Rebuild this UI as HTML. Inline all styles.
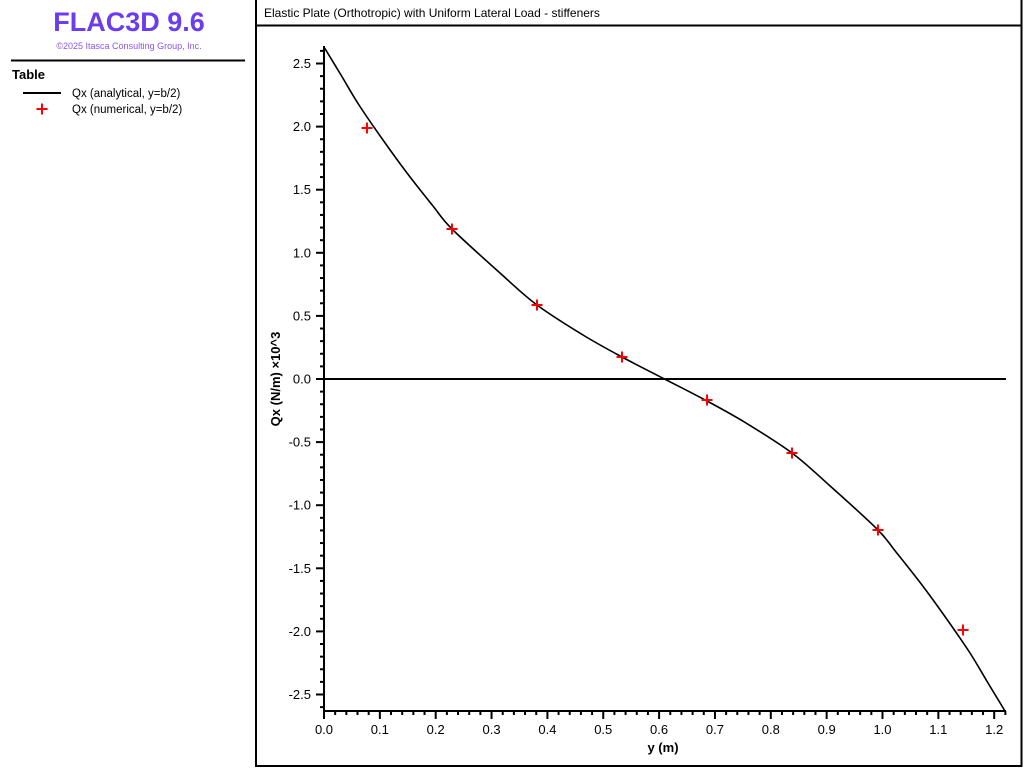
<!DOCTYPE html>
<html><head><meta charset="utf-8"><style>
html,body{margin:0;padding:0;background:#fff;width:1024px;height:768px;overflow:hidden}
svg{display:block}
text{font-family:"Liberation Sans",sans-serif}
</style></head><body>
<svg id="s" width="1024" height="768" xmlns="http://www.w3.org/2000/svg">
<rect x="0" y="0" width="1024" height="768" fill="#fff"/>
<line x1="256" y1="0" x2="256" y2="767" stroke="#000" stroke-width="2"/>
<line x1="256" y1="25.5" x2="1022" y2="25.5" stroke="#000" stroke-width="2"/>
<line x1="1021.5" y1="0" x2="1021.5" y2="767" stroke="#000" stroke-width="2"/>
<line x1="256" y1="766" x2="1022" y2="766" stroke="#000" stroke-width="2"/>
<text x="264" y="17" font-size="12" fill="#000">Elastic Plate (Orthotropic) with Uniform Lateral Load - stiffeners</text>
<text x="129" y="31" font-size="27" font-weight="bold" fill="#6a3df0" text-anchor="middle">FLAC3D 9.6</text>
<text x="129" y="49" font-size="9" fill="#8a55f0" text-anchor="middle">©2025 Itasca Consulting Group, Inc.</text>
<line x1="11" y1="60.5" x2="245" y2="60.5" stroke="#000" stroke-width="2"/>
<text x="12" y="79" font-size="13" font-weight="bold" fill="#000">Table</text>
<line x1="23" y1="93" x2="61" y2="93" stroke="#000" stroke-width="2"/>
<text x="72" y="97" font-size="11.5" fill="#000">Qx (analytical, y=b/2)</text>
<path d="M36.5 109h11M42 103.5v11" stroke="#f00" stroke-width="2"/>
<text x="72" y="113" font-size="11.5" fill="#000">Qx (numerical, y=b/2)</text>
<g id="ax" stroke="#000" stroke-width="2" fill="none">
<line x1="324" y1="46" x2="324" y2="712"/>
<line x1="323" y1="711" x2="1006" y2="711"/>
<line x1="324" y1="379" x2="1006" y2="379"/>
</g>
<g id="lab" font-size="13" fill="#000"></g>
<path id="cv" d="" stroke="#000" stroke-width="1.6" fill="none" stroke-linejoin="round"/>
<g id="pts" stroke="#f00" stroke-width="2"></g>
<text x="663" y="752" font-size="13" font-weight="bold" text-anchor="middle" fill="#000">y (m)</text>
<text transform="translate(280,379) rotate(-90)" font-size="13" font-weight="bold" text-anchor="middle" fill="#000">Qx (N/m) ×10^3</text>
</svg>
<script>
var ns="http://www.w3.org/2000/svg",ax=document.getElementById('ax'),lab=document.getElementById('lab'),pts=document.getElementById('pts');
function L(g,x1,y1,x2,y2){var l=document.createElementNS(ns,'line');l.setAttribute('x1',x1);l.setAttribute('y1',y1);l.setAttribute('x2',x2);l.setAttribute('y2',y2);g.appendChild(l);}
function T(x,y,s,a){var t=document.createElementNS(ns,'text');t.setAttribute('x',x);t.setAttribute('y',y);t.setAttribute('text-anchor',a);t.textContent=s;lab.appendChild(t);}
var y0=379,py=126.2;
for(var i=-26;i<=26;i++){var y=y0-i*py/10;if(y<46)continue;var maj=(i%5==0);L(ax,maj?316:320,y,324,y);if(maj){T(311,y+4.5,(i/10).toFixed(1),'end');}}
var x0=324,px=55.85;
for(var j=0;j<=61;j++){var x=x0+j*px/5;if(x>1006)break;var maj=(j%5==0);L(ax,x,711,x,maj?719:715);if(maj){T(x,734,(j/50).toFixed(1),'middle');}}
[[367,128],[452,229],[537,305],[622,357],[707,400],[792,453],[878,530],[963,630]].forEach(function(p){L(pts,p[0]-5.5,p[1],p[0]+5.5,p[1]);L(pts,p[0],p[1]-5.5,p[0],p[1]+5.5);});
var up=[[324,47],[341,75],[359,105],[383,140],[407,173],[433,206],[452,229],[500,273],[537,305],[583,335],[622,357],[664.5,379]];
var P=up.slice();for(var k=up.length-2;k>=0;k--)P.push([1329-up[k][0],758-up[k][1]]);
var d="M"+P[0][0]+","+P[0][1];
for(var k=0;k<P.length-1;k++){var p0=P[Math.max(k-1,0)],p1=P[k],p2=P[k+1],p3=P[Math.min(k+2,P.length-1)];
d+=" C"+(p1[0]+(p2[0]-p0[0])/6)+","+(p1[1]+(p2[1]-p0[1])/6)+" "+(p2[0]-(p3[0]-p1[0])/6)+","+(p2[1]-(p3[1]-p1[1])/6)+" "+p2[0]+","+p2[1];}
document.getElementById('cv').setAttribute('d',d);
</script>
</body></html>
